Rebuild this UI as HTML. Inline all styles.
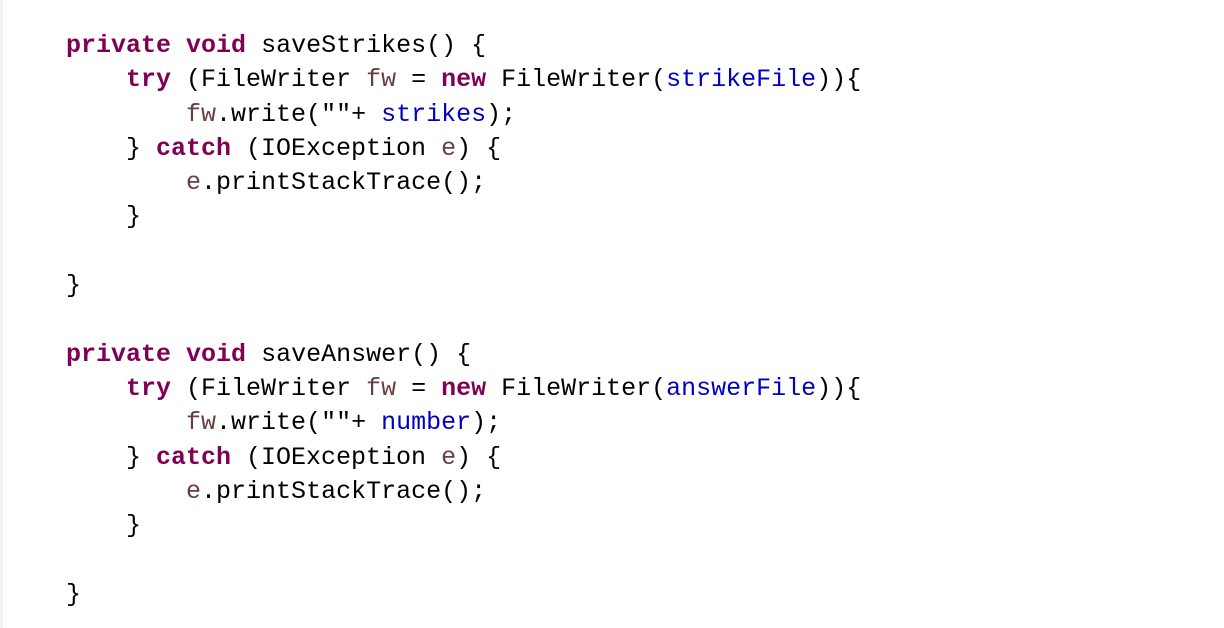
<!DOCTYPE html>
<html><head><meta charset="utf-8"><style>
html,body{margin:0;padding:0;background:#fff;width:1224px;height:628px;overflow:hidden}
.l{position:absolute;left:0;top:0;width:3px;height:628px;background:#f3f3f3}
pre{position:absolute;left:66px;top:29px;margin:0;font-family:"Liberation Mono",monospace;font-size:25px;line-height:34.3px;color:#000}
b{color:#7f0055;font-weight:bold}
.f{color:#0000c0}
.v{color:#6a3e3e}
.s{color:#000}
</style></head><body><div class="l"></div>
<pre><b>private</b> <b>void</b> saveStrikes() {
    <b>try</b> (FileWriter <span class="v">fw</span> = <b>new</b> FileWriter(<span class="f">strikeFile</span>)){
        <span class="v">fw</span>.write(<span class="s">""</span>+ <span class="f">strikes</span>);
    } <b>catch</b> (IOException <span class="v">e</span>) {
        <span class="v">e</span>.printStackTrace();
    }

}

<b>private</b> <b>void</b> saveAnswer() {
    <b>try</b> (FileWriter <span class="v">fw</span> = <b>new</b> FileWriter(<span class="f">answerFile</span>)){
        <span class="v">fw</span>.write(<span class="s">""</span>+ <span class="f">number</span>);
    } <b>catch</b> (IOException <span class="v">e</span>) {
        <span class="v">e</span>.printStackTrace();
    }

}</pre>
</body></html>
